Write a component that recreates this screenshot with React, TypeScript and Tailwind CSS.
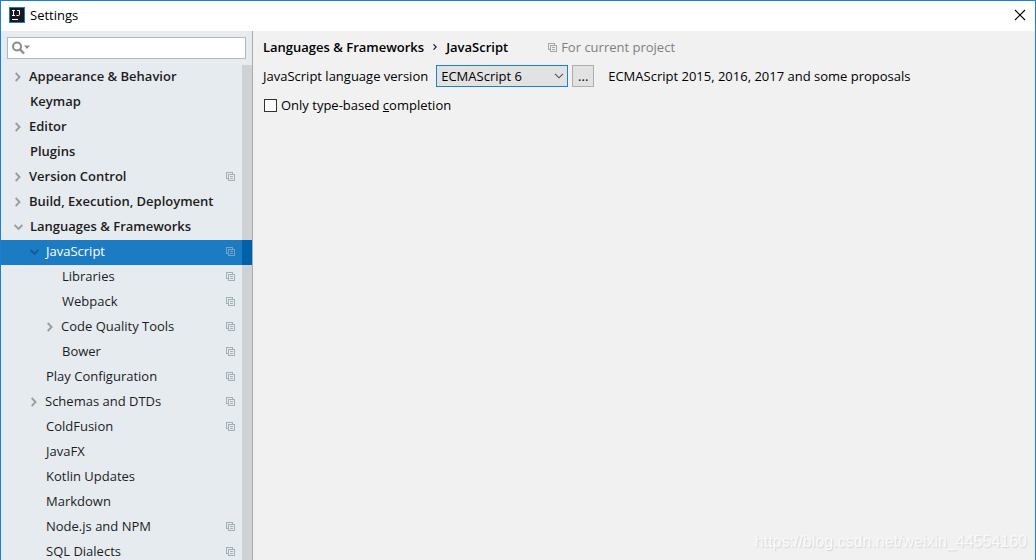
type Entry = {
  label: string;
  level: number;
  state?: 'open' | 'closed';
  project?: boolean;
  selected?: boolean;
};

const entries: Entry[] = [
  { label: 'Appearance & Behavior', level: 0, state: 'closed' },
  { label: 'Keymap', level: 0 },
  { label: 'Editor', level: 0, state: 'closed' },
  { label: 'Plugins', level: 0 },
  { label: 'Version Control', level: 0, state: 'closed', project: true },
  { label: 'Build, Execution, Deployment', level: 0, state: 'closed' },
  { label: 'Languages & Frameworks', level: 0, state: 'open' },
  { label: 'JavaScript', level: 1, state: 'open', project: true, selected: true },
  { label: 'Libraries', level: 2, project: true },
  { label: 'Webpack', level: 2, project: true },
  { label: 'Code Quality Tools', level: 2, state: 'closed', project: true },
  { label: 'Bower', level: 2, project: true },
  { label: 'Play Configuration', level: 1, project: true },
  { label: 'Schemas and DTDs', level: 1, state: 'closed', project: true },
  { label: 'ColdFusion', level: 1, project: true },
  { label: 'JavaFX', level: 1 },
  { label: 'Kotlin Updates', level: 1 },
  { label: 'Markdown', level: 1 },
  { label: 'Node.js and NPM', level: 1, project: true },
  { label: 'SQL Dialects', level: 1, project: true },
];

const indents = ['pl-[13px]', 'pl-[29px]', 'pl-[45px]'];

function ProjectIcon({ className }: { className: string }) {
  return (
    <svg viewBox="0 0 9 9" className={`h-[9px] w-[9px] shrink-0 ${className}`} fill="none" stroke="currentColor" shapeRendering="crispEdges" aria-hidden="true">
      <path d="M2 6.5H.5V.5H6.5V2" />
      <path d="M2.5 2.5H8.5V8.5H2.5ZM4 4.5H7M4 6.5H7" />
    </svg>
  );
}

function Chevron({ open, selected }: { open: boolean; selected?: boolean }) {
  return open ? (
    <svg viewBox="0 0 16 10" className={`h-[10px] w-4 shrink-0 ${selected ? 'text-[#155a8c]' : 'text-[#999c9f]'}`} fill="none" stroke="currentColor" strokeWidth="1.8" aria-hidden="true">
      <path d="M.6 3L4.5 7L8.4 3" />
    </svg>
  ) : (
    <svg viewBox="0 0 15 10" className="h-[10px] w-[15px] shrink-0 text-[#999c9f]" fill="none" stroke="currentColor" strokeWidth="1.8" aria-hidden="true">
      <path d="M1.7 1L5.6 5L1.7 9" />
    </svg>
  );
}

function Row({ entry }: { entry: Entry }) {
  const { label, level, state, project, selected } = entry;
  return (
    <li
      role="treeitem"
      aria-level={level + 1}
      aria-selected={!!selected}
      aria-expanded={state ? state === 'open' : undefined}
      className={`flex h-[25px] ${selected ? 'bg-[#1b7cc4] text-white' : 'text-[#1d1d1d]'}`}
    >
      <div className={`flex flex-1 items-center pr-[7px] pb-0.5 ${indents[level]}`}>
        {state ? <Chevron open={state === 'open'} selected={selected} /> : <span className="w-4 shrink-0" />}
        <span className={`flex-1 pb-0.5 whitespace-nowrap ${level === 0 ? 'font-semibold' : ''}`}>{label}</span>
        {project && <ProjectIcon className={selected ? 'text-[#74a5c9]' : 'text-[#a4b0b8]'} />}
      </div>
      <span className={`w-[10px] ${selected ? 'bg-[#0262a9]' : 'bg-[#cdd2d6]'}`} />
    </li>
  );
}

export default function App() {
  return (
    <div className="relative flex h-screen flex-col overflow-hidden border-x border-t border-[#1a80d4] bg-[#f1f1f1] font-['Open_Sans','Noto_Sans_CJK_SC',sans-serif] text-[13px] leading-5 text-black">
      <header className="flex h-[30px] shrink-0 items-center bg-white pr-[9px] pb-0.5 pl-2">
        <svg viewBox="0 0 16 16" className="h-4 w-4" aria-hidden="true">
          <path fill="#1a78d8" d="M0 0H16V16H0Z" />
          <path fill="#17181c" d="M1 1H15V15H1Z" />
          <path stroke="#fff" strokeWidth="1" fill="none" d="M3 3.5H6M4.5 3.5V8.5M3 8.5H6M8 3.5H10.5V7.3Q10.5 8.5 9.5 8.5H7.5" />
          <path fill="#fff" d="M3 12H9V13H3Z" />
        </svg>
        <h1 className="ml-[5px] flex-1">Settings</h1>
        <button type="button" aria-label="Close">
          <svg viewBox="0 0 12 12" className="h-3 w-3" fill="none" stroke="#000" strokeWidth="1.1" aria-hidden="true">
            <path d="M1 1L11 11M11 1L1 11" />
          </svg>
        </button>
      </header>

      <div className="flex min-h-0 flex-1">
        <nav aria-label="Settings sections" className="w-[252px] shrink-0 overflow-hidden border-r border-[#a8acaf] bg-[#e6ebef]">
          <label className="mx-1.5 mt-1.5 mb-1.5 flex h-[22px] items-center border border-[#b5b8ba] bg-white pl-1">
            <svg viewBox="0 0 19 14" className="h-[14px] w-[19px] shrink-0" aria-hidden="true">
              <circle cx="5" cy="5.5" r="4" fill="none" stroke="#8b8b8b" strokeWidth="2" />
              <path d="M8 8.5L12 12.5" stroke="#8b8b8b" strokeWidth="2.4" />
              <path fill="#8b8b8b" d="M12 4.5H18L15 8Z" />
            </svg>
            <input type="text" aria-label="Search settings" className="min-w-0 flex-1 bg-transparent outline-none" />
          </label>
          <ul role="tree">
            {entries.map((entry) => (
              <Row key={entry.label} entry={entry} />
            ))}
          </ul>
        </nav>

        <main className="flex-1 pt-1.5 pl-[10px]">
          <div className="flex items-center">
            <h2 className="flex items-center font-semibold">
              <span>Languages &amp; Frameworks</span>
              <svg viewBox="0 0 4 6" className="mx-[9px] h-1.5 w-1" fill="none" stroke="#222" strokeWidth="1.2" aria-hidden="true">
                <path d="M.5 .3L3.2 3L.5 5.7" />
              </svg>
              <span>JavaScript</span>
            </h2>
            <ProjectIcon className="ml-10 text-[#a0a8ad]" />
            <span className="ml-1 text-[#808080]">For current project</span>
          </div>

          <div className="mt-2 flex items-center">
            <label htmlFor="version">JavaScript language version</label>
            <div className="ml-2 grid items-center">
              <select id="version" className="col-start-1 row-start-1 h-[22px] w-[132px] appearance-none border border-[#1a80d4] bg-[#e2e2e2] pl-1 outline-none">
                <option>ECMAScript 6</option>
              </select>
              <svg viewBox="0 0 10 6" className="pointer-events-none col-start-1 row-start-1 mr-1 h-1.5 w-[10px] justify-self-end" fill="none" stroke="#505050" strokeWidth="1.1" aria-hidden="true">
                <path d="M1 .8L5 4.8L9 .8" />
              </svg>
            </div>
            <button type="button" aria-label="Choose versions" className="ml-1 flex h-[22px] w-[22px] items-center justify-center border border-[#adadad] bg-[#e2e2e2]">
              ...
            </button>
            <span className="ml-[14px]">ECMAScript 2015, 2016, 2017 and some proposals</span>
          </div>

          <label className="mt-2 flex items-center">
            <input type="checkbox" className="ml-px h-[13px] w-[13px] appearance-none border border-[#333] bg-white" />
            <span className="ml-1">
              Only type-based <u>c</u>ompletion
            </span>
          </label>
        </main>
      </div>

      <p className="pointer-events-none absolute right-2 bottom-1.5 font-['Liberation_Sans',sans-serif] text-base text-[#fafafa] [text-shadow:1px_1px_1px_#d4d4d4]">
        https://blog.csdn.net/weixin_44554160
      </p>
    </div>
  );
}
